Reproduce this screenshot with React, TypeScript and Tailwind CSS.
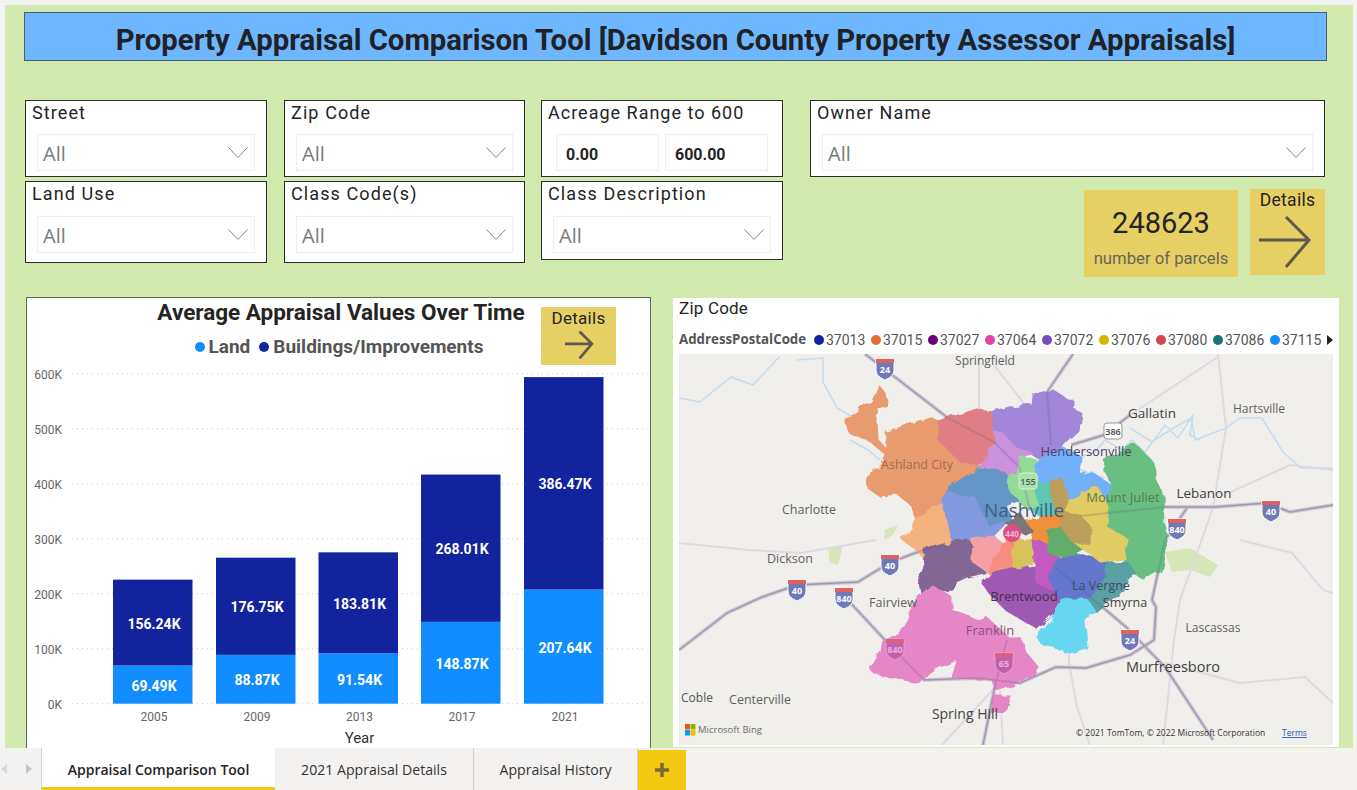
const legendItems = [
  ['37013', '#12239e'],
  ['37015', '#e66c37'],
  ['37027', '#6b007b'],
  ['37064', '#e044a7'],
  ['37072', '#744ec2'],
  ['37076', '#d9b300'],
  ['37080', '#d64550'],
  ['37086', '#197278'],
  ['37115', '#118dff'],
];

const bars = [
  { year: '2005', x: 113, land: 69.49, build: 156.24 },
  { year: '2009', x: 216, land: 88.87, build: 176.75 },
  { year: '2013', x: 318.5, land: 91.54, build: 183.81 },
  { year: '2017', x: 421, land: 148.87, build: 268.01 },
  { year: '2021', x: 524, land: 207.64, build: 386.47 },
];

// zip code areas, in page coordinates
const zips: [string, string][] = [
  ['845,420 855,417 866,405 873,405 880,388 886,396 887,403 878,410 876,420 877,440 884,448 890,452 884,452 870,440 850,432', '#e9976a'],
  ['885,432 902,428 930,418 940,423 940,440 960,460 975,465 982,468 975,473 960,483 947,493 940,503 932,506 918,520 910,503 897,493 880,495 868,487 867,477 883,465 888,447', '#e9976a'],
  ['940,423 952,418 977,410 993,412 995,433 998,443 992,447 983,463 975,465 960,460 940,440', '#df7a80'],
  ['993,412 1010,408 1032,405 1033,395 1053,391 1067,400 1073,402 1073,410 1080,413 1077,430 1063,443 1050,457 1042,460 1030,452 1015,448 1003,435 995,433', '#9d81d9'],
  ['995,433 1003,435 1015,448 1030,452 1020,458 1018,475 1007,475 1003,472 982,468 992,447 998,443', '#c98cdd'],
  ['1042,460 1063,448 1080,457 1078,475 1090,472 1113,487 1103,500 1087,493 1068,503 1063,480 1050,480 1038,483 1033,467', '#6cadfb'],
  ['1104,468 1108,458 1120,452 1134,445 1140,450 1150,460 1154,465 1156,480 1162,495 1163,528 1165,540 1159,570 1143,578 1130,570 1120,550 1100,530 1104,512 1113,485', '#62bd7c'],
  ['1007,477 1018,475 1020,457 1037,462 1033,467 1038,483 1037,503 1027,507 1017,500 1008,493', '#90dc92'],
  ['1038,483 1050,482 1057,493 1063,507 1062,517 1043,517 1033,510 1037,503', '#58c4b2'],
  ['975,473 980,470 1003,472 1007,477 1008,493 1017,500 1005,505 1010,520 987,527 973,497 947,493 960,483', '#5d92c6'],
  ['942,498 947,493 973,497 987,527 1008,522 993,537 973,540 970,543 950,540 942,517', '#7e96e0'],
  ['932,506 942,505 950,540 930,548 927,562 920,552 904,540 918,522', '#f5af7a'],
  ['928,550 950,543 966,540 990,557 985,573 968,577 955,583 946,590 933,588 924,595 920,573', '#7d5e8f'],
  ['973,540 993,537 1003,545 995,560 990,573 972,560', '#f59ca3'],
  ['995,560 1003,545 1015,538 1018,550 1012,570 990,573', '#f78878'],
  ['1015,540 1033,540 1037,560 1020,567 1012,570', '#d8bf55'],
  ['983,583 994,573 1020,567 1051,570 1058,590 1062,600 1055,610 1036,627 1007,610 992,595', '#9a52b0'],
  ['1034,540 1047,540 1060,560 1051,570 1055,590 1038,583', '#c052bf'],
  ['1060,560 1073,553 1108,563 1108,577 1086,600 1060,598 1051,580 1055,567', '#5b72cc'],
  ['1108,563 1126,562 1134,573 1117,593 1095,613 1088,600 1086,600 1108,577', '#529c9c'],
  ['1062,600 1086,600 1095,612 1084,620 1086,647 1066,653 1062,647 1042,643 1038,637 1051,620 1056,610', '#61d5f1'],
  ['933,587 950,597 950,610 977,620 985,617 1007,637 1021,640 1025,653 1038,668 1021,682 996,690 994,680 977,677 953,677 959,658 937,667 924,677 920,682 893,677 872,670 883,653 885,640 907,628 915,603', '#e581c6'],
  ['996,697 1010,697 1005,710 992,712', '#e581c6'],
  ['1068,503 1082,493 1097,488 1108,508 1105,527 1127,540 1123,557 1100,560 1073,540 1060,523 1063,513', '#e1ca5c'],
  ['1052,480 1060,478 1068,503 1063,513 1080,517 1090,527 1088,542 1070,543 1060,527 1060,517 1050,483', '#b99a52'],
  ['1045,530 1060,527 1070,543 1078,547 1067,557 1050,553', '#5ca962'],
  ['1027,522 1057,515 1060,525 1045,530 1045,540 1035,540', '#f08b33'],
  ['1007,523 1020,515 1030,530 1023,532', '#7a7070'],
];

const roads = [
  '865,354 948,418 994,442 1020,468 1030,510',
  '1073,354 1047,392 1051,445',
  '1130,415 1104,435 1071,445',
  '1080,516 1165,507 1215,507 1266,503 1290,512 1333,505',
  '679,650 727,613 762,597 797,585 858,582 889,563 915,553 940,545',
  '845,597 885,640 924,680 977,678 1020,683 1056,667 1086,668 1130,655 1154,640 1156,607 1152,600 1165,540 1187,508',
  '1055,567 1126,627 1165,667 1213,740',
  '1007,640 994,690 983,745',
];

const minorRoads = [
  '979,354 979,408',
  '994,365 1025,405',
  '1218,354 1226,428 1213,508 1180,600 1174,640 1163,745',
  '1130,415 1218,357',
  '1231,492 1290,465 1333,470',
  '1165,663 1240,683 1305,677 1333,703',
  '1240,540 1292,553 1323,590 1333,593',
  '679,543 749,550 801,553 876,540',
  '1069,600 1069,663 1077,707 1090,745',
  '942,745 999,683',
  '1003,745 1000,690',
];

const rivers = [
  '679,398 700,402 731,377 753,385 780,356',
  '797,360 823,358 823,382 837,408 854,418',
  '1104,478 1080,470 1078,458 1095,452 1105,440 1122,450 1132,440 1145,452 1165,425 1178,438 1193,415 1190,435 1200,440',
  '1130,428 1152,442 1170,430 1191,418 1195,440 1226,428 1240,418 1262,418 1283,452 1301,468 1333,468',
  '850,440 868,450 880,460',
];

const mapLabels: [string, number, number, number, string?][] = [
  ['Springfield', 985, 365, 12],
  ['Gallatin', 1152, 418, 13.5, '#3f3f3f'],
  ['Hartsville', 1259, 413, 12],
  ['Hendersonville', 1086, 456, 13, '#4b3f6b'],
  ['Ashland City', 917, 469, 12.5, '#a06a55'],
  ['Charlotte', 809, 514, 12.5],
  ['Nashville', 1024, 517, 19, '#3f5f88'],
  ['Mount Juliet', 1123, 502, 13, '#5a7a50'],
  ['Lebanon', 1204, 498, 13.5, '#3f3f3f'],
  ['Dickson', 790, 563, 12.5],
  ['Fairview', 893, 607, 12.5],
  ['Brentwood', 1024, 601, 13, '#43304f'],
  ['La Vergne', 1101, 590, 12.5, '#3d4a66'],
  ['Smyrna', 1125, 607, 12.5, '#3f3f3f'],
  ['Franklin', 990, 635, 13, '#8c4f7a'],
  ['Lascassas', 1213, 632, 12],
  ['Murfreesboro', 1173, 672, 14.5, '#3f3f3f'],
  ['Coble', 697, 702, 12, '#555'],
  ['Centerville', 760, 704, 12.5],
  ['Spring Hill', 965, 719, 14, '#444'],
];

const shields: [string, number, number, boolean?][] = [
  ['24', 885, 367],
  ['40', 1271, 509],
  ['840', 1177, 527],
  ['40', 890, 563],
  ['40', 797, 588],
  ['840', 844, 596],
  ['840', 895, 647, true],
  ['65', 1004, 661, true],
  ['24', 1130, 638],
];

function Chevron() {
  return (
    <svg width="22" height="13" viewBox="0 0 22 13" fill="none">
      <path d="M1.5 1.5L11 11.5L20.5 1.5" stroke="#777" strokeWidth="0.9" />
    </svg>
  );
}

function ArrowRight({ size }: { size: 'lg' | 'sm' }) {
  const cls = size === 'lg' ? 'w-[54px] h-[52px]' : 'w-[30px] h-[28px]';
  return (
    <svg className={cls} viewBox="0 0 54 52" fill="none">
      <path d="M1 24H51M28 1L51 24L28 51" stroke="#5c5a4e" strokeWidth={size === 'lg' ? 3 : 5} />
    </svg>
  );
}

function Slicer({
  title,
  width = 'w-[242px]',
  height = 'h-[77px]',
  boxTop = 'mt-[10px]',
}: {
  title: string;
  width?: string;
  height?: string;
  boxTop?: string;
}) {
  return (
    <div className={`${width} ${height} shrink-0 bg-white border border-[#2c2c2c] flex flex-col`}>
      <div className="pl-[6px] text-[18px] leading-[23px] tracking-[1.1px] text-[#252423]">{title}</div>
      <div className={`mx-[11px] ${boxTop} h-[37px] border border-[#eeeeee] flex items-center justify-between pl-[5px] pr-[5px]`}>
        <span className="text-[20px] text-[#7a7a7a] pt-[3px] font-['Open_Sans',sans-serif]">All</span>
        <Chevron />
      </div>
    </div>
  );
}

function RangeSlicer() {
  return (
    <div className="w-[242px] h-[77px] shrink-0 bg-white border border-[#2c2c2c] flex flex-col">
      <div className="pl-[6px] text-[18px] leading-[23px] tracking-[1px] text-[#252423]">Acreage Range to 600</div>
      <div className="mx-[14px] mt-[10px] flex gap-[6px]">
        {['0.00', '600.00'].map((v) => (
          <div key={v} className="w-[104px] h-[37px] border border-[#eeeeee] flex items-center pl-[9px] pt-[4px] text-[16px] font-bold text-[#252423]">
            {v}
          </div>
        ))}
      </div>
    </div>
  );
}

function Shield({ label, x, y, tint }: { label: string; x: number; y: number; tint?: boolean }) {
  return (
    <g transform={`translate(${x} ${y})`}>
      <path d="M-9 -8H9V3C9 9 4 11 0 13C-4 11 -9 9 -9 3Z" fill={tint ? '#bf62ab' : '#6f79b8'} stroke={tint ? '#e9a0d4' : '#fff'} strokeWidth="1" />
      <path d="M-9 -8H9V-4H-9Z" fill={tint ? '#d9627f' : '#e0625e'} />
      <text x="0" y="6" textAnchor="middle" fontSize="9" fontWeight="700" fill={tint ? '#eeb0dc' : '#fff'}>
        {label}
      </text>
    </g>
  );
}

function ChartPanel() {
  const y0 = 704.7;
  const k = 0.5497;
  return (
    <div className="w-[625px] h-[470px] shrink-0 bg-white border border-[#5b6b55]">
      <div className="flex h-[68px]">
        <div className="w-[514px] pl-[114px] text-center">
          <div className="text-[22.5px] leading-[27px] font-bold text-[#252423] mt-[1px] whitespace-nowrap">Average Appraisal Values Over Time</div>
          <div className="flex justify-center items-center gap-[4px] mt-[10px] text-[19px] leading-[22px] font-bold text-[#555555] -ml-[114px] pl-[110px]">
            <span className="w-[10px] h-[10px] rounded-full bg-[#118dff]" />
            <span className="mr-[5px]">Land</span>
            <span className="w-[10px] h-[10px] rounded-full bg-[#12239e]" />
            <span>Buildings/Improvements</span>
          </div>
        </div>
        <div className="w-[75px] h-[58px] mt-[9px] bg-[#e6d063] flex flex-col items-center">
          <div className="text-[17px] leading-[20px] mt-[1px] tracking-[0.3px] text-[#252423]">Details</div>
          <div className="mt-[3px]">
            <ArrowRight size="sm" />
          </div>
        </div>
      </div>
      <svg width="623" height="382" viewBox="27 367 623 382">
        {[0, 100, 200, 300, 400, 500, 600].map((v) => (
          <g key={v}>
            <line x1="72" x2="647" y1={y0 - v * k} y2={y0 - v * k} stroke="#c8c8c8" strokeDasharray="1 4" />
            <text x="62" y={y0 - v * k + 5} textAnchor="end" fontSize="12" fill="#666">
              {v}K
            </text>
          </g>
        ))}
        {bars.map((b) => {
          const landH = b.land * k;
          const buildH = b.build * k;
          return (
            <g key={b.year}>
              <rect x={b.x} y={y0 - landH} width="79.5" height={landH} fill="#118dff" />
              <rect x={b.x} y={y0 - landH - buildH} width="79.5" height={buildH} fill="#12239e" />
              <text x={b.x + 41} y={y0 - landH / 2 + 6} textAnchor="middle" fontSize="14" fontWeight="700" fill="#fff">
                {b.land.toFixed(2)}K
              </text>
              <text x={b.x + 41} y={y0 - landH - buildH / 2 + 6} textAnchor="middle" fontSize="14" fontWeight="700" fill="#fff">
                {b.build.toFixed(2)}K
              </text>
              <text x={b.x + 41} y="722" textAnchor="middle" fontSize="12" fill="#666">
                {b.year}
              </text>
            </g>
          );
        })}
        <text x="359.5" y="744" textAnchor="middle" fontSize="15" fill="#333">
          Year
        </text>
      </svg>
    </div>
  );
}

function NashvilleMap() {
  return (
    <svg width="654" height="391" viewBox="679 354 654 391" className="block bg-[#f1efec] font-['Open_Sans',sans-serif]">
      <defs>
        <filter id="rough" x="-5%" y="-5%" width="110%" height="110%">
          <feTurbulence type="fractalNoise" baseFrequency="0.07" numOctaves="3" seed="4" />
          <feDisplacementMap in="SourceGraphic" scale="9" />
          <feGaussianBlur stdDeviation="0.4" />
        </filter>
      </defs>
      <g fill="#d6e6b8">
        <path d="M1165 552L1190 548L1218 565L1210 577L1190 570L1172 572Z" />
        <path d="M828 548L843 545L838 565L830 563Z" />
        <path d="M885 530L898 525L893 535L884 540Z" />
      </g>
      <g fill="none" stroke="#c4dcee" strokeWidth="1.6">
        {rivers.map((p) => (
          <polyline key={p} points={p} />
        ))}
      </g>
      <g fill="none" stroke="#dfd8e3" strokeWidth="2">
        {minorRoads.map((p) => (
          <polyline key={p} points={p} />
        ))}
      </g>
      <g fill="none" stroke="#d2cad8" strokeWidth="4">
        {roads.map((p) => (
          <polyline key={p} points={p} />
        ))}
      </g>
      <g fill="none" stroke="#a9a3b1" strokeWidth="1">
        {roads.map((p) => (
          <polyline key={p} points={p} />
        ))}
      </g>
      <g opacity="0.95" filter="url(#rough)">
        {zips.map(([p, c]) => (
          <polygon key={p} points={p} fill={c} stroke={c} strokeWidth="3" strokeLinejoin="round" />
        ))}
      </g>
      <g fill="none" stroke="#6d5a8a" strokeWidth="2" opacity="0.22">
        {roads.map((p) => (
          <polyline key={p} points={p} />
        ))}
      </g>
      {shields.map(([l, x, y, tint]) => (
        <Shield key={`${l}-${x}`} label={l} x={x} y={y} tint={tint} />
      ))}
      <rect x="1104" y="423" width="18" height="16" rx="3" fill="#fff" stroke="#999" />
      <text x="1113" y="434.5" textAnchor="middle" fontSize="9" fontWeight="600" fill="#444">386</text>
      <rect x="1019" y="473" width="18" height="16" rx="3" fill="#a7e2a4" stroke="#d9eed6" />
      <text x="1028" y="484.5" textAnchor="middle" fontSize="9" fontWeight="600" fill="#557">155</text>
      <circle cx="1012" cy="533" r="9" fill="#d85088" />
      <text x="1012" y="537" textAnchor="middle" fontSize="8" fontWeight="700" fill="#f3b6d0">440</text>
      {mapLabels.map(([t, x, y, s, c]) => (
        <text key={t} x={x} y={y} textAnchor="middle" fontSize={s} fill={c ?? '#5f5f5f'}>
          {t}
        </text>
      ))}
      <rect x="685" y="724" width="5" height="5.5" fill="#f25022" />
      <rect x="690.5" y="724" width="5" height="5.5" fill="#7fba00" />
      <rect x="685" y="730" width="5" height="5.5" fill="#00a4ef" />
      <rect x="690.5" y="730" width="5" height="5.5" fill="#ffb900" />
      <text x="698" y="733" fontSize="9.5" fill="#6b6b6b">Microsoft Bing</text>
      <text x="1076" y="736" fontSize="8.5" fill="#333">© 2021 TomTom, © 2022 Microsoft Corporation</text>
      <text x="1282" y="736" fontSize="8.5" fill="#2a5aa8" textDecoration="underline">Terms</text>
    </svg>
  );
}

function MapPanel() {
  return (
    <div className="w-[666px] h-[449px] mt-[1px] shrink-0 bg-white px-[6px] flex flex-col">
      <div className="text-[17px] leading-[22px] mt-[-1px] tracking-[0.2px] text-[#252423]">Zip Code</div>
      <div className="flex items-center h-[24px] mt-[9px] mb-[2px] text-[14px] text-[#555555] whitespace-nowrap font-['Open_Sans',sans-serif]">
        <span className="w-[137px] text-[13.3px] font-bold">AddressPostalCode</span>
        <div className="flex">
          {legendItems.map(([code, color]) => (
            <span key={code} className="w-[57px] flex items-center gap-[2px]">
              <span className="w-[10px] h-[10px] rounded-full shrink-0" style={{ backgroundColor: color }} />
              <span className="text-[14px] font-['Roboto',sans-serif]">{code}</span>
            </span>
          ))}
        </div>
        <span className="w-0 h-0 border-y-[5px] border-y-transparent border-l-[6px] border-l-[#222222]" />
      </div>
      <NashvilleMap />
    </div>
  );
}

function TabBar() {
  const tabCls = 'h-full flex items-center justify-center pt-[2px] border-r border-[#d0cfce] text-[14.1px] text-[#333333]';
  return (
    <div className="h-[42px] shrink-0 bg-[#f3f2f1] flex font-['Open_Sans',sans-serif]">
      <div className="w-[41px] flex items-center pl-[1px] gap-[19px]">
        <span className="w-0 h-0 border-y-[5px] border-y-transparent border-r-[6px] border-r-[#d6d6d6]" />
        <span className="w-0 h-0 border-y-[5px] border-y-transparent border-l-[6px] border-l-[#c4c4c4]" />
      </div>
      <div className="w-[234px] h-full bg-white border-l border-[#d0cfce] border-b-[3px] border-b-[#f2c811] pt-[4px] flex items-center justify-center text-[14px] font-semibold text-[#252423]">
        Appraisal Comparison Tool
      </div>
      <div className={`${tabCls} w-[199px]`}>2021 Appraisal Details</div>
      <div className={`${tabCls} w-[164px]`}>Appraisal History</div>
      <div className="w-[48px] h-[40px] mt-[2px] bg-[#f2c811] flex items-center justify-center">
        <svg width="14" height="14" viewBox="0 0 14 14">
          <path d="M7 0V14M0 7H14" stroke="#7a6a33" strokeWidth="3.5" />
        </svg>
      </div>
    </div>
  );
}

export default function App() {
  return (
    <div className="w-[1357px] h-[790px] overflow-hidden bg-[#f3f3f3] pt-[5px] flex flex-col font-['Roboto',sans-serif]">
      <main className="flex-1 min-h-0 overflow-hidden ml-[5px] w-[1348px] bg-[#d2eaae] pl-[19px] pt-[7px]">
        <header className="w-[1303px] h-[49px] bg-[#6eb7ff] border border-[#44607a] pt-[8px] flex items-center justify-center">
          <h1 className="text-[29.3px] font-bold text-[#1f2328] whitespace-nowrap">
            Property Appraisal Comparison Tool [Davidson County Property Assessor Appraisals]
          </h1>
        </header>

        <div className="flex mt-[39px] ml-[1px] h-[163px]">
          <div className="flex flex-col gap-[4px] mr-[17px]">
            <Slicer title="Street" />
            <Slicer title="Land Use" height="h-[82px]" boxTop="mt-[11px]" />
          </div>
          <div className="flex flex-col gap-[4px] mr-[16px]">
            <Slicer title="Zip Code" width="w-[241px]" />
            <Slicer title="Class Code(s)" width="w-[241px]" height="h-[82px]" boxTop="mt-[11px]" />
          </div>
          <div className="flex flex-col gap-[4px] mr-[27px]">
            <RangeSlicer />
            <Slicer title="Class Description" height="h-[79px]" boxTop="mt-[11px]" />
          </div>
          <div className="w-[515px] flex flex-col">
            <Slicer title="Owner Name" width="w-[515px]" />
            <div className="flex justify-end gap-[12px] mt-[12px]">
              <div className="w-[154px] h-[87px] mt-[1px] bg-[#e6d063] flex flex-col items-center">
                <div className="text-[29px] leading-[34px] mt-[16px] text-[#252423]">248623</div>
                <div className="text-[16.7px] leading-[22px] mt-[8px] text-[#66655a]">number of parcels</div>
              </div>
              <div className="w-[75px] h-[86px] bg-[#e6d063] flex flex-col items-center">
                <div className="text-[17.5px] leading-[21px] mt-[1px] tracking-[0.3px] text-[#252423]">Details</div>
                <div className="mt-[5px] -ml-[6px]">
                  <ArrowRight size="lg" />
                </div>
              </div>
            </div>
          </div>
        </div>

        <div className="flex gap-[22px] mt-[34px] ml-[2px]">
          <ChartPanel />
          <MapPanel />
        </div>
      </main>
      <TabBar />
    </div>
  );
}
